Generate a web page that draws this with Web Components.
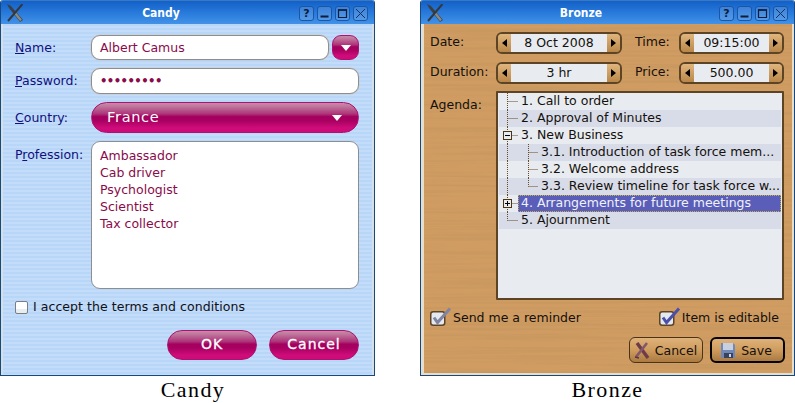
<!DOCTYPE html>
<html>
<head>
<meta charset="utf-8">
<title>Candy and Bronze</title>
<style>
    html, body { margin: 0; padding: 0; background: #fff; overflow: hidden; }
    body { font-family: "DejaVu Sans", sans-serif; font-size: 12.5px; }
</style>
</head>
<body>
<theme-gallery>
    <theme-shot caption="Candy" shift="11">
        <title-window title="Candy">
            <candy-panel>
                <candy-label><u>N</u>ame:</candy-label>
                <div style="display:flex;gap:3px">
                    <candy-input style="flex:1">Albert Camus</candy-input>
                    <candy-arrow></candy-arrow>
                </div>
                <candy-label><u>P</u>assword:</candy-label>
                <candy-input tall dots>•••••••••</candy-input>
                <candy-label><u>C</u>ountry:</candy-label>
                <candy-combo>France</candy-combo>
                <candy-label top>P<u>r</u>ofession:</candy-label>
                <candy-list>
                    <div>Ambassador</div>
                    <div>Cab driver</div>
                    <div>Psychologist</div>
                    <div>Scientist</div>
                    <div>Tax collector</div>
                </candy-list>
                <candy-check slot="footer">I accept the terms and conditions</candy-check>
                <candy-button slot="buttons">OK</candy-button>
                <candy-button slot="buttons">Cancel</candy-button>
            </candy-panel>
        </title-window>
    </theme-shot>
    <theme-shot caption="Bronze">
        <title-window title="Bronze">
            <bronze-panel>
                <span>Date:</span>
                <bronze-spin>8 Oct 2008</bronze-spin>
                <span class="second">Time:</span>
                <bronze-spin>09:15:00</bronze-spin>
                <span>Duration:</span>
                <bronze-spin>3 hr</bronze-spin>
                <span class="second">Price:</span>
                <bronze-spin>500.00</bronze-spin>
                <span class="agenda">Agenda:</span>
                <bronze-tree class="wide">
                    <tree-row level="1">1. Call to order</tree-row>
                    <tree-row level="1" alt>2. Approval of Minutes</tree-row>
                    <tree-row level="1" expander="minus">3. New Business</tree-row>
                    <tree-row level="2" alt>3.1. Introduction of task force mem...</tree-row>
                    <tree-row level="2">3.2. Welcome address</tree-row>
                    <tree-row level="2" alt last>3.3. Review timeline for task force w...</tree-row>
                    <tree-row level="1" expander="plus" selected>4. Arrangements for future meetings</tree-row>
                    <tree-row level="1" alt last>5. Ajournment</tree-row>
                </bronze-tree>
                <bronze-check slot="checks" faded>Send me a reminder</bronze-check>
                <bronze-check slot="checks">Item is editable</bronze-check>
                <bronze-button slot="buttons" icon="cancel">Cancel</bronze-button>
                <bronze-button slot="buttons" icon="save" default>Save</bronze-button>
            </bronze-panel>
        </title-window>
    </theme-shot>
</theme-gallery>

<script>
// small helper, every element below is just a shadow root with its own style
class ShadowElement extends HTMLElement {
    constructor() {
        super();
        this.attachShadow({ mode: 'open' });
        this.shadowRoot.innerHTML = this.render();
    }
    render() { return '<slot></slot>'; }
}

class ThemeGallery extends ShadowElement {
    render() {
        return `
            <style>
                :host { display: flex; gap: 45px; width: 795px; }
            </style>
            <slot></slot>
        `;
    }
}

class ThemeShot extends ShadowElement {
    render() {
        return `
            <style>
                :host { display: flex; flex-direction: column; width: 375px; }
                .caption {
                    text-align: center;
                    padding-left: ${this.getAttribute('shift') || 0}px;
                    font: 22px/27px "Liberation Serif", serif;
                    letter-spacing: 1.4px;
                    color: #000;
                }
            </style>
            <slot></slot>
            <div class="caption">${this.getAttribute('caption')}</div>
        `;
    }
}

class TitleWindow extends ShadowElement {
    render() {
        return `
            <style>
                :host {
                    display: flex;
                    flex-direction: column;
                    height: 376px;
                    box-sizing: border-box;
                    border: 1px solid #17497f;
                    border-top: 0;
                    border-radius: 3px 3px 0 0;
                    overflow: hidden;
                }
                .bar {
                    display: flex;
                    align-items: center;
                    height: 24px;
                    flex: none;
                    padding: 1px 6px 0 6px;
                    box-sizing: border-box;
                    background: linear-gradient(#1260c8, #2a7cdc 55%, #4292e8);
                    border-top: 1px solid #3a78c0;
                }
                .logo { width: 16px; height: 18px; flex: none; }
                .name {
                    flex: 1;
                    text-align: center;
                    color: #fff;
                    font: bold 12px "DejaVu Sans", sans-serif;
                    font-stretch: condensed;
                }
                .btns { display: flex; gap: 3px; }
                .btn {
                    width: 15px;
                    height: 15px;
                    box-sizing: border-box;
                    border: 1px solid #1b55a6;
                    border-radius: 3px;
                    background: rgba(255,255,255,.14);
                    display: flex;
                    align-items: center;
                    justify-content: center;
                    color: #0c1c3c;
                    font: bold 11px "DejaVu Sans", sans-serif;
                }
                .btn svg { width: 13px; height: 13px; flex: none; }
            </style>
            <div class="bar">
                <svg class="logo" viewBox="0 0 16 18">
                    <path d="M0 0 L4 2 L16 16 L13 18 L2 4 Z" fill="#3c4046"/>
                    <path d="M8 9 L14 16.5" stroke="#8a8a84" stroke-width="2.4"/>
                    <path d="M15.5 0 L1 17" stroke="#34383e" stroke-width="2"/>
                </svg>
                <div class="name">${this.getAttribute('title')}</div>
                <div class="btns">
                    <div class="btn">?</div>
                    <div class="btn"><svg viewBox="0 0 13 13"><path d="M2.5 9.5h8" stroke="#0c1c3c" stroke-width="2"/></svg></div>
                    <div class="btn"><svg viewBox="0 0 13 13"><path d="M2.5 3h8v7.5h-8z" fill="none" stroke="#0c1c3c" stroke-width="1.2"/><path d="M2 3h9" stroke="#0c1c3c" stroke-width="1.6"/></svg></div>
                    <div class="btn"><svg viewBox="0 0 13 13"><path d="M2 2l9 9M11 2l-9 9" stroke="#14305c" stroke-width="1"/></svg></div>
                </div>
            </div>
            <slot></slot>
        `;
    }
}

class CandyPanel extends ShadowElement {
    render() {
        return `
            <style>
                :host {
                    display: flex;
                    flex-direction: column;
                    flex: 1;
                    box-sizing: border-box;
                    padding: 11px 13px 15px 12px;
                    border: 2px solid #d5dfe6;
                    border-top: 0;
                    background: repeating-linear-gradient(#b8d6f7 0 2px, #c2dcf9 2px 4px);
                }
                .form {
                    display: grid;
                    grid-template-columns: 76px 1fr;
                    row-gap: 8px;
                }
                .footer { display: block; margin-top: 10px; }
                .buttons { display: flex; justify-content: flex-end; gap: 12px; margin-top: 15px; }
            </style>
            <div class="form"><slot></slot></div>
            <div class="footer"><slot name="footer"></slot></div>
            <div class="buttons"><slot name="buttons"></slot></div>
        `;
    }
}

class CandyLabel extends ShadowElement {
    render() {
        const top = this.hasAttribute('top');
        return `
            <style>
                :host {
                    display: flex;
                    align-items: ${top ? 'flex-start' : 'center'};
                    padding-top: ${top ? '6px' : '0'};
                    color: #10107e;
                    font: 12.5px/16px "DejaVu Sans", sans-serif;
                }
            </style>
            <span><slot></slot></span>
        `;
    }
}

class CandyInput extends ShadowElement {
    render() {
        const dots = this.hasAttribute('dots');
        return `
            <style>
                :host {
                    display: block;
                    box-sizing: border-box;
                    height: ${this.hasAttribute('tall') ? 26 : 25}px;
                    padding: 0 8px;
                    background: #fff;
                    border: 1px solid #8e8e8e;
                    border-radius: 9px;
                    box-shadow: 0 0 0 .5px #c8c8c8;
                    color: #8a0a4a;
                    font: ${dots ? 'bold 11.6px' : '12.5px'} "DejaVu Sans", sans-serif;
                    ${dots ? 'letter-spacing: -.55px;' : ''}
                    line-height: ${this.hasAttribute('tall') ? 24 : 23}px;
                }
            </style>
            <slot></slot>
        `;
    }
}

const CANDY_GLOSS = 'linear-gradient(#c88aa8 0, #c07a9e 10%, #ad3378 38%, #a40060 47%, #a70060 60%, #cf0c7a 86%, #cc0a78 100%)';

class CandyArrow extends ShadowElement {
    render() {
        return `
            <style>
                :host {
                    display: flex;
                    align-items: center;
                    justify-content: center;
                    width: 27px;
                    height: 25px;
                    box-sizing: border-box;
                    border: 1px solid #b01070;
                    border-radius: 9px;
                    background: ${CANDY_GLOSS};
                }
                svg { width: 10px; height: 6px; }
            </style>
            <svg viewBox="0 0 10 6"><path d="M0 0h10L5 6z" fill="#fff"/></svg>
        `;
    }
}

class CandyCombo extends ShadowElement {
    render() {
        return `
            <style>
                :host {
                    display: flex;
                    align-items: center;
                    justify-content: space-between;
                    height: 31px;
                    box-sizing: border-box;
                    padding: 0 16px 2px 15px;
                    border: 1px solid #b01070;
                    border-radius: 16px;
                    background: ${CANDY_GLOSS};
                    color: #fff;
                    font: 14.5px "DejaVu Sans", sans-serif;
                    letter-spacing: .7px;
                }
                svg { width: 10px; height: 6px; margin-top: 2px; }
            </style>
            <span><slot></slot></span>
            <svg viewBox="0 0 10 6"><path d="M0 0h10L5 6z" fill="#fff"/></svg>
        `;
    }
}

class CandyList extends ShadowElement {
    render() {
        return `
            <style>
                :host {
                    display: block;
                    height: 148px;
                    box-sizing: border-box;
                    padding: 5px 8px;
                    background: #fff;
                    border: 1px solid #8e8e8e;
                    border-radius: 9px;
                    color: #8a0a4a;
                    font: 12.5px/17px "DejaVu Sans", sans-serif;
                }
            </style>
            <slot></slot>
        `;
    }
}

class CandyCheck extends ShadowElement {
    render() {
        return `
            <style>
                :host {
                    display: flex;
                    align-items: center;
                    gap: 5px;
                    color: #101018;
                    font: 12.5px/16px "DejaVu Sans", sans-serif;
                    letter-spacing: .06px;
                }
                .box {
                    width: 13px;
                    height: 13px;
                    box-sizing: border-box;
                    background: linear-gradient(#fff 60%, #e8eef0 60%);
                    border: 1px solid #7c7c84;
                    border-radius: 2px;
                }
            </style>
            <div class="box"></div>
            <span><slot></slot></span>
        `;
    }
}

class CandyButton extends ShadowElement {
    render() {
        return `
            <style>
                :host {
                    display: flex;
                    align-items: center;
                    justify-content: center;
                    width: 90px;
                    height: 30px;
                    box-sizing: border-box;
                    padding-bottom: 2px;
                    border: 1px solid #b01070;
                    border-radius: 15px;
                    background: ${CANDY_GLOSS};
                    color: #fff;
                    font: 14px "DejaVu Sans", sans-serif;
                    -webkit-text-stroke: .3px #fff;
                    letter-spacing: 1px;
                }
            </style>
            <slot></slot>
        `;
    }
}

class BronzePanel extends ShadowElement {
    render() {
        return `
            <style>
                :host {
                    display: flex;
                    flex-direction: column;
                    flex: 1;
                    position: relative;
                    overflow: hidden;
                    box-sizing: border-box;
                    padding: 7px 0 10px 6px;
                    border: 3px solid #e6decb;
                    border-width: 0 2px 2px 3px;
                    background: #d09c62;
                    color: #14100c;
                    font: 12.5px "DejaVu Sans", sans-serif;
                }
                .wood { position: absolute; inset: 0; width: 100%; height: 100%; }
                .form {
                    position: relative;
                    display: grid;
                    grid-template-columns: 66px 126px 57px 105px;
                    grid-template-rows: 22px 22px 209px;
                    row-gap: 8px;
                    align-items: center;
                }
                ::slotted(span) { padding-bottom: 2px; }
                ::slotted(.second) { padding-left: 13px; }
                ::slotted(.wide) { grid-column: 2 / 5; }
                ::slotted(.agenda) { align-self: start; padding: 6px 0 0; }
                .checks {
                    position: relative;
                    display: flex;
                    justify-content: space-between;
                    padding-right: 13px;
                    margin-top: 7px;
                    height: 19px;
                }
                .buttons {
                    position: relative;
                    display: flex;
                    justify-content: flex-end;
                    gap: 7px;
                    padding-right: 7px;
                    margin-top: 11px;
                }
            </style>
            <svg class="wood" preserveAspectRatio="none">
                <filter id="brush" x="0" y="0" width="100%" height="100%">
                    <feTurbulence type="fractalNoise" baseFrequency="0.005 0.3" numOctaves="3" seed="7"/>
                    <feColorMatrix values="0 0 0 0 .45  0 0 0 0 .27  0 0 0 0 .1  .8 0 0 0 -.33"/>
                </filter>
                <rect width="100%" height="100%" filter="url(#brush)"/>
            </svg>
            <div class="form"><slot></slot></div>
            <div class="checks"><slot name="checks"></slot></div>
            <div class="buttons"><slot name="buttons"></slot></div>
        `;
    }
}

class BronzeSpin extends ShadowElement {
    render() {
        return `
            <style>
                :host {
                    display: flex;
                    height: 22px;
                    box-sizing: border-box;
                    border: 2px solid #5d4425;
                    border-radius: 6px;
                    overflow: hidden;
                    margin-top: 1px;
                }
                .arrow {
                    flex: none;
                    width: 13px;
                    display: flex;
                    align-items: center;
                    justify-content: center;
                    background: linear-gradient(#e0b67e, #b98648);
                }
                .arrow svg { width: 5px; height: 8px; }
                .value {
                    flex: 1;
                    text-align: center;
                    background: #e8ecf0;
                    color: #14100c;
                    font: 12.5px/17px "DejaVu Sans", sans-serif;
                }
            </style>
            <div class="arrow"><svg viewBox="0 0 5 8"><path d="M5 0v8L0 4z" fill="#000"/></svg></div>
            <div class="value"><slot></slot></div>
            <div class="arrow"><svg viewBox="0 0 5 8"><path d="M0 0v8l5-4z" fill="#000"/></svg></div>
        `;
    }
}

class BronzeTree extends ShadowElement {
    render() {
        return `
            <style>
                :host {
                    display: block;
                    height: 209px;
                    box-sizing: border-box;
                    padding: 0 1px;
                    border: 2px solid #5d4425;
                    border-radius: 1px;
                    background: #e8ecf0;
                }
            </style>
            <slot></slot>
        `;
    }
}

class TreeRow extends ShadowElement {
    render() {
        const level = Number(this.getAttribute('level'));
        const expander = this.getAttribute('expander');
        const last = this.hasAttribute('last');
        const gutter = level === 1 ? 19 : 39;
        const dots = 'stroke="#6a4a20" stroke-width="1" stroke-dasharray="1 1"';
        let lines = '';
        // outer trunk runs on past the nested rows, the last row stops at its own elbow
        if (level === 2 || !last) lines += `<path d="M8.5 0V17" ${dots}/>`;
        if (level === 1 && last) lines += `<path d="M8.5 0V8.5" ${dots}/>`;
        if (level === 1) lines += `<path d="M8.5 8.5H19" ${dots}/>`;
        if (level === 2) {
            lines += `<path d="M29.5 0V${last ? 8.5 : 17}" ${dots}/><path d="M29.5 8.5H39" ${dots}/>`;
        }
        if (expander) {
            lines += `<rect x="4.5" y="4.5" width="8" height="8" fill="#e8ecf0" stroke="#4a3414"/>`;
            lines += `<path d="M6 8.5h5" stroke="#000"/>`;
            if (expander === 'plus') lines += `<path d="M8.5 6v5" stroke="#000"/>`;
        }
        const selected = this.hasAttribute('selected');
        return `
            <style>
                :host {
                    display: flex;
                    height: 17px;
                    background: ${this.hasAttribute('alt') ? '#d8dce8' : 'transparent'};
                    font: 12.5px/16px "DejaVu Sans", sans-serif;
                    color: #14100c;
                }
                svg { flex: none; width: ${gutter}px; height: 17px; }
                .text {
                    flex: 1;
                    box-sizing: border-box;
                    padding-left: 3px;
                    white-space: nowrap;
                    overflow: hidden;
                    ${selected ? 'background:#5a5eb8;color:#f0f2fa;outline:1px dotted #c8b040;outline-offset:-1px;' : ''}
                }
            </style>
            <svg viewBox="0 0 ${gutter} 17">${lines}</svg>
            <div class="text"><slot></slot></div>
        `;
    }
}

class BronzeCheck extends ShadowElement {
    render() {
        const faded = this.hasAttribute('faded');
        const mark = faded ? '#8084a0' : '#4a4fa8';
        return `
            <style>
                :host {
                    display: flex;
                    align-items: flex-end;
                    color: #14100c;
                    font: 12.5px/16px "DejaVu Sans", sans-serif;
                }
                svg { width: 23px; height: 19px; flex: none; }
            </style>
            <svg viewBox="0 0 23 19">
                <rect x=".75" y="4.75" width="14" height="13.5" rx="2.5" fill="#e4e8f0" stroke="#5d4425" stroke-width="1.5"/>
                <path d="M4 10.5l3.5 5L20 1.5" fill="none" stroke="${mark}" stroke-width="3"/>
            </svg>
            <span><slot></slot></span>
        `;
    }
}

class BronzeButton extends ShadowElement {
    render() {
        const def = this.hasAttribute('default');
        const icon = this.getAttribute('icon') === 'cancel'
            ? `<svg viewBox="0 0 16 17">
                   <path d="M3 1L14 16" stroke="#6e3c48" stroke-width="3.4"/>
                   <path d="M13 1L2 15" stroke="#84566a" stroke-width="2.6"/>
                   <path d="M1 15l4 1" stroke="#5a3440" stroke-width="1.5"/>
               </svg>`
            : `<svg viewBox="0 0 16 17">
                   <path d="M1 1h12l2 2v13H1z" fill="#7088b8"/>
                   <path d="M3 1h10v7H3z" fill="#c8d0e0"/>
                   <path d="M4 11h9v5H4z" fill="#38425c"/>
                   <path d="M9 12h2v3H9z" fill="#d0d4e0"/>
               </svg>`;
        return `
            <style>
                :host {
                    display: flex;
                    align-items: center;
                    justify-content: center;
                    gap: 5px;
                    width: ${def ? 75 : 74}px;
                    height: 26px;
                    box-sizing: border-box;
                    padding-right: ${def ? 3 : 1}px;
                    border: ${def ? '2px solid #080604' : '1.5px solid #4a3418'};
                    border-radius: 6px;
                    background: linear-gradient(#deb27a, #cf9c5e 50%, #aa7a42);
                    color: #14100c;
                    font: 12.5px "DejaVu Sans", sans-serif;
                }
                svg { width: 16px; height: 17px; flex: none; }
            </style>
            ${icon}
            <span><slot></slot></span>
        `;
    }
}

customElements.define('theme-gallery', ThemeGallery);
customElements.define('theme-shot', ThemeShot);
customElements.define('title-window', TitleWindow);
customElements.define('candy-panel', CandyPanel);
customElements.define('candy-label', CandyLabel);
customElements.define('candy-input', CandyInput);
customElements.define('candy-arrow', CandyArrow);
customElements.define('candy-combo', CandyCombo);
customElements.define('candy-list', CandyList);
customElements.define('candy-check', CandyCheck);
customElements.define('candy-button', CandyButton);
customElements.define('bronze-panel', BronzePanel);
customElements.define('bronze-spin', BronzeSpin);
customElements.define('bronze-tree', BronzeTree);
customElements.define('tree-row', TreeRow);
customElements.define('bronze-check', BronzeCheck);
customElements.define('bronze-button', BronzeButton);
</script>
</body>
</html>
